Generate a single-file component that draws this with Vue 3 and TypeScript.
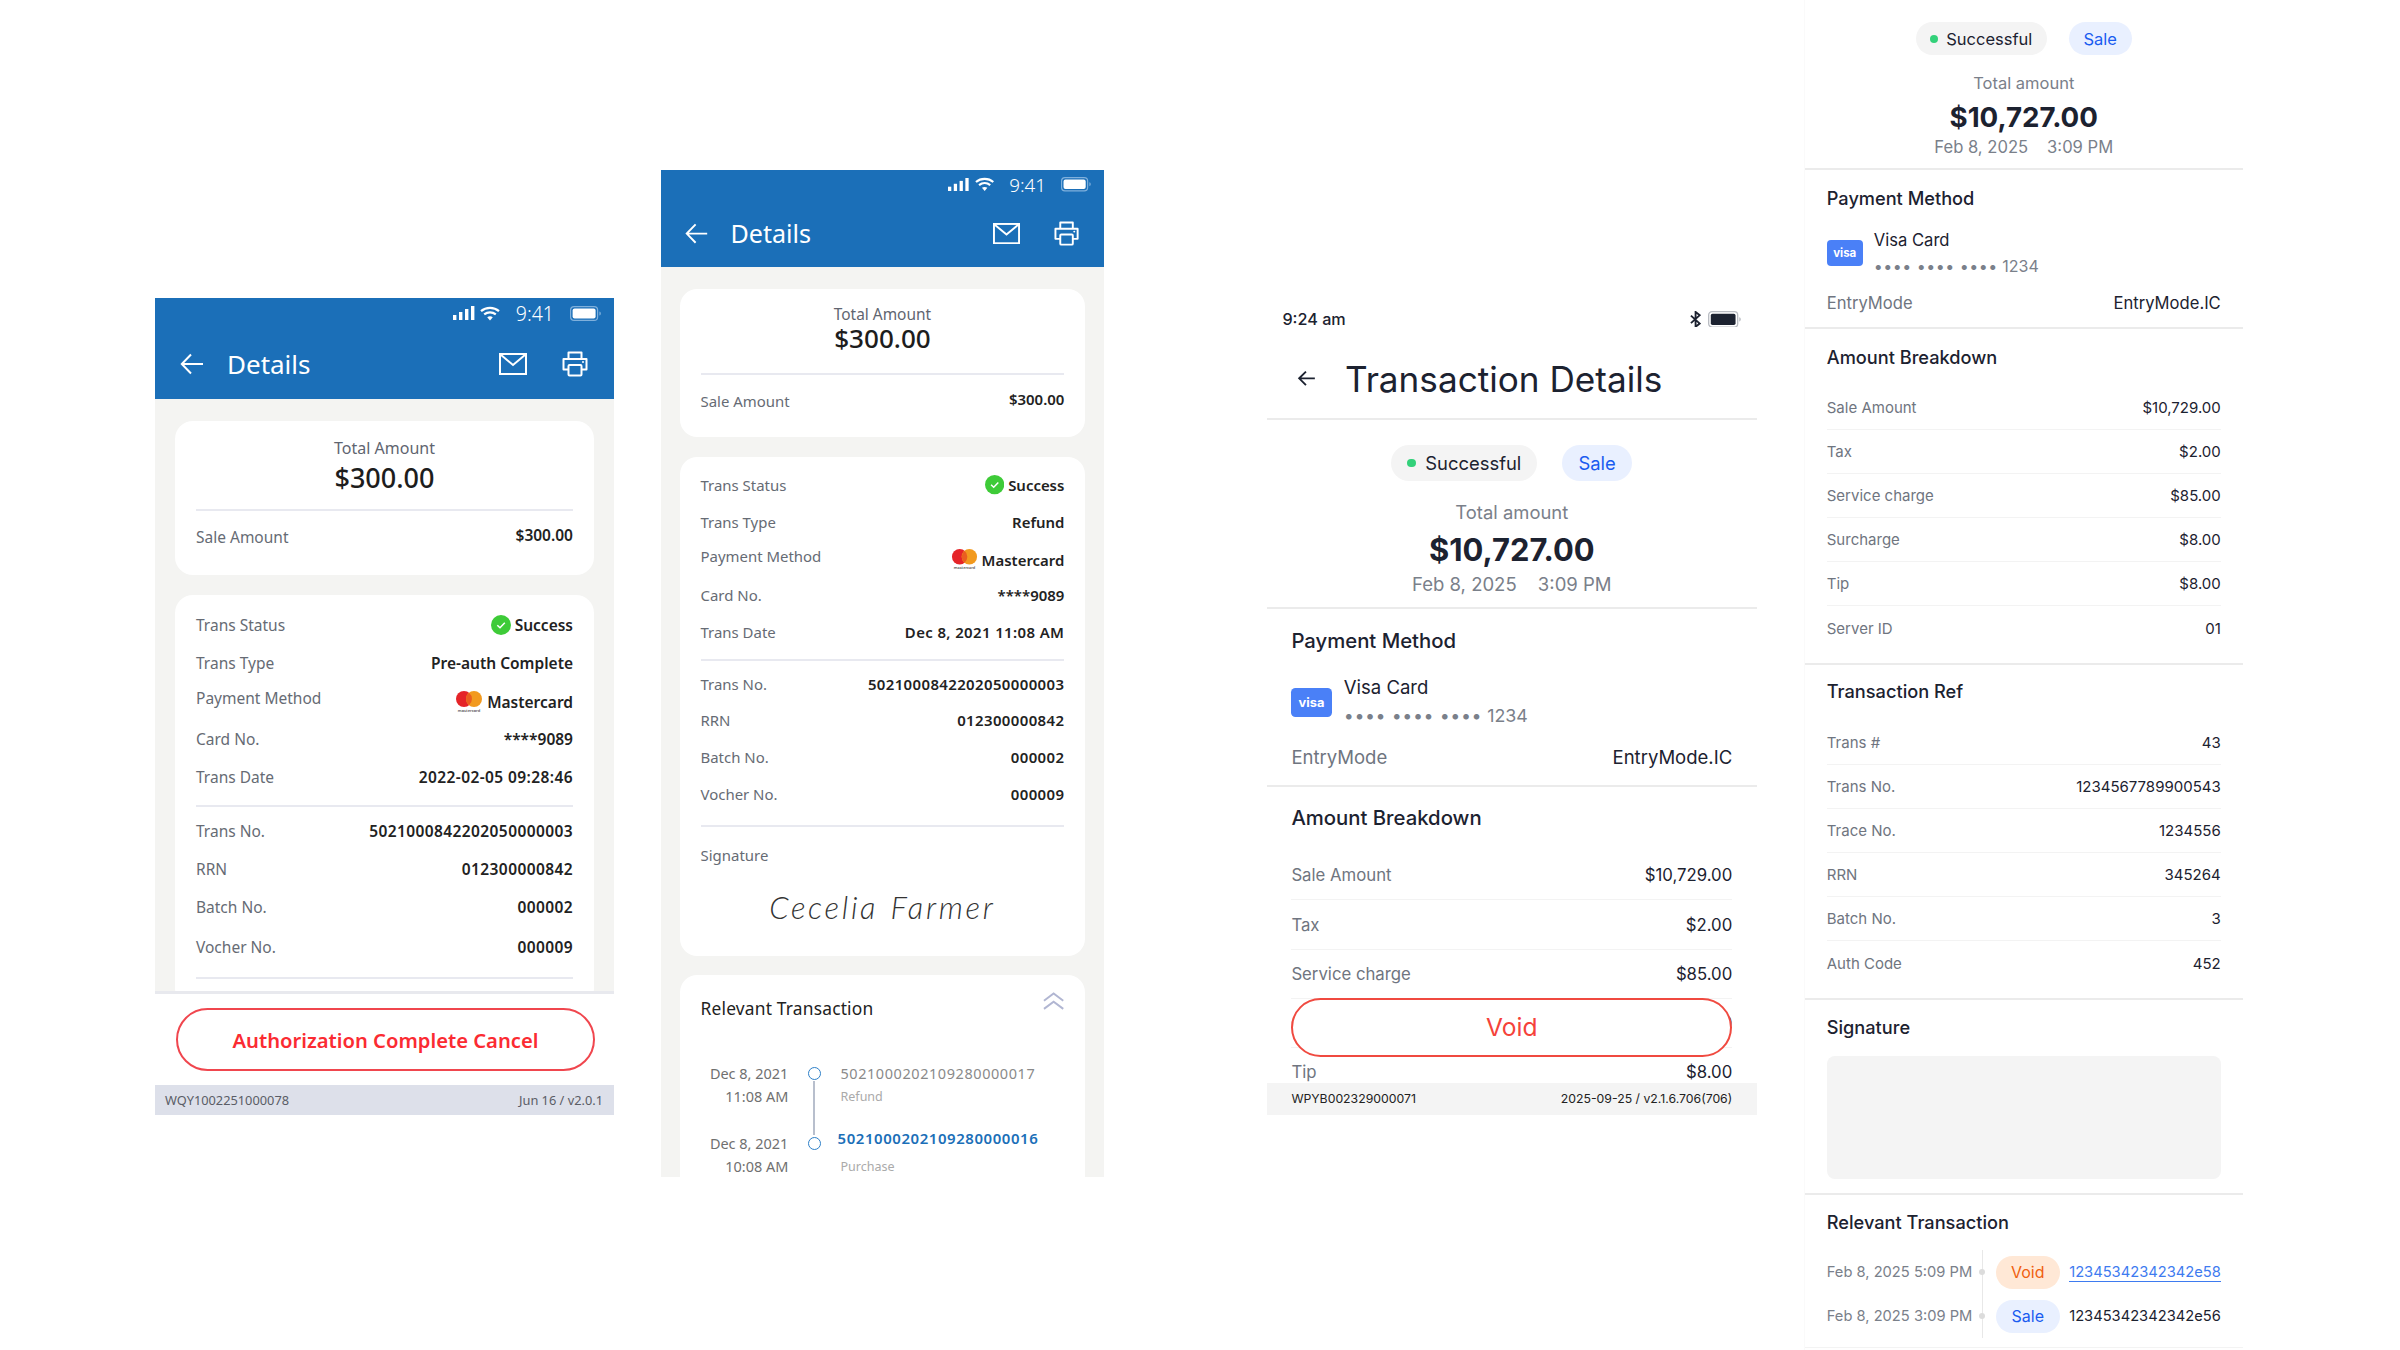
<script setup lang="ts">
interface Row { label: string; value: string }

const legacy = [
  {
    cls: 'p1',
    type: 'Pre-auth Complete',
    date: '2022-02-05 09:28:46',
    extended: false,
  },
  {
    cls: 'p2',
    type: 'Refund',
    date: 'Dec 8, 2021 11:08 AM',
    extended: true,
  },
]

const refRows: Row[] = [
  { label: 'Trans No.', value: '5021000842202050000003' },
  { label: 'RRN', value: '012300000842' },
  { label: 'Batch No.', value: '000002' },
  { label: 'Vocher No.', value: '000009' },
]

const breakdown: Row[] = [
  { label: 'Sale Amount', value: '$10,729.00' },
  { label: 'Tax', value: '$2.00' },
  { label: 'Service charge', value: '$85.00' },
  { label: 'Surcharge', value: '$8.00' },
  { label: 'Tip', value: '$8.00' },
  { label: 'Server ID', value: '01' },
]

const transRef: Row[] = [
  { label: 'Trans #', value: '43' },
  { label: 'Trans No.', value: '1234567789900543' },
  { label: 'Trace No.', value: '1234556' },
  { label: 'RRN', value: '345264' },
  { label: 'Batch No.', value: '3' },
  { label: 'Auth Code', value: '452' },
]

const modern = [
  { cls: 'p3', rows: breakdown.slice(0, 5), full: false },
  { cls: 'p4', rows: breakdown, full: true },
]
</script>

<template>
  <div class="canvas">
    <section v-for="p in legacy" :key="p.cls" class="phone" :class="p.cls">
      <header class="bar">
        <div class="status">
          <svg class="signal" viewBox="0 0 22 14" width="22" height="14"><rect x="0" y="9" width="3.4" height="5" fill="#fff"/><rect x="6" y="6" width="3.4" height="8" fill="#fff"/><rect x="12" y="3" width="3.4" height="11" fill="#fff"/><rect x="18" y="0" width="3.4" height="14" fill="#fff"/></svg>
          <svg class="wifi" viewBox="0 0 20 15" width="20" height="15"><path d="M1 5.2C6 .8 14 .8 19 5.2" fill="none" stroke="#fff" stroke-width="2.2"/><path d="M4.2 8.4c3.4-2.8 8.2-2.8 11.6 0" fill="none" stroke="#fff" stroke-width="2.2"/><path d="M7.2 11.2c1.7-1.2 3.9-1.2 5.6 0L10 14.4z" fill="#fff"/></svg>
          <span class="clock">9:41</span>
          <svg class="battery" viewBox="0 0 31 15" width="31" height="15"><rect x=".6" y=".6" width="27" height="13.8" rx="3.5" fill="none" stroke="#7fb0dc" stroke-width="1.2"/><rect x="2.6" y="2.6" width="23" height="9.8" rx="2" fill="#fff"/><path d="M29.4 5.5c1 .3 1.4 1.1 1.4 2s-.4 1.700-1.400 2z" fill="#7fb0dc"/></svg>
        </div>
        <nav class="nav">
          <svg class="nav-back" viewBox="0 0 24 22" width="24" height="22"><path d="M23 11H2M11 1.500 1.800 11l9.200 9.500" fill="none" stroke="#fff" stroke-width="2"/></svg>
          <span class="nav-title">Details</span>
          <svg class="nav-mail" viewBox="0 0 28 22" width="28" height="22"><rect x="1" y="1" width="26" height="20" fill="none" stroke="#fff" stroke-width="2"/><path d="M1.500 1.500 14 12 26.500 1.500" fill="none" stroke="#fff" stroke-width="2"/></svg>
          <svg class="nav-print" viewBox="0 0 26 26" width="26" height="26"><path d="M6.500 8V1.500h13V8M6.500 18.500H1.500V8h23v10.500h-5" fill="none" stroke="#fff" stroke-width="2" stroke-linejoin="round"/><rect x="6.500" y="14" width="13" height="10.500" rx="1" fill="none" stroke="#fff" stroke-width="2"/><circle cx="21" cy="11" r="1" fill="#fff"/></svg>
        </nav>
      </header>

      <div class="body">
        <article class="card summary">
          <div class="total">Total Amount</div>
          <div class="amount">$300.00</div>
          <div class="rule"></div>
          <div class="row sale">
            <span class="label">Sale Amount</span>
            <span class="value raised">$300.00</span>
          </div>
        </article>

        <article class="card info">
          <div class="row">
            <span class="label">Trans Status</span>
            <span class="value with-icon">
              <svg viewBox="0 0 20 20" width="20" height="20"><circle cx="10" cy="10" r="10" fill="#3ecb38"/><path d="M6.300 10.200 9 12.800l4.800-5" fill="none" stroke="#fff" stroke-width="1.500"/></svg>
              Success
            </span>
          </div>
          <div class="row">
            <span class="label">Trans Type</span>
            <span class="value">{{ p.type }}</span>
          </div>
          <div class="row">
            <span class="label lifted">Payment Method</span>
            <span class="value with-icon lowered">
              <svg viewBox="0 0 28 22" width="28" height="22"><circle cx="9" cy="8" r="8" fill="#e52428"/><circle cx="19" cy="8" r="8" fill="#f29a1f"/><path d="M14 1.800a8 8 0 0 1 0 12.400 8 8 0 0 1 0-12.400z" fill="#ea5e20"/><text x="14" y="21" text-anchor="middle" font-size="4" fill="#555">mastercard</text></svg>
              Mastercard
            </span>
          </div>
          <div class="row">
            <span class="label">Card No.</span>
            <span class="value">****9089</span>
          </div>
          <div class="row">
            <span class="label">Trans Date</span>
            <span class="value numeric">{{ p.date }}</span>
          </div>
          <div class="rule tight"></div>
          <div v-for="r in refRows" :key="r.label" class="row ref-row">
            <span class="label">{{ r.label }}</span>
            <span class="value numeric">{{ r.value }}</span>
          </div>
          <div class="rule closing"></div>
          <template v-if="p.extended">
            <div class="sig-label label">Signature</div>
            <div class="sig">Cecelia Farmer</div>
          </template>
        </article>

        <article v-if="p.extended" class="card relevant">
          <div class="rel-head">
            <span class="rel-title">Relevant Transaction</span>
            <svg class="rel-chev" viewBox="0 0 22 19" width="22" height="19"><path d="M1 9 11 1.500 21 9M1 17.500 11 10l10 7.500" fill="none" stroke="#b1b6d2" stroke-width="2"/></svg>
          </div>
          <div class="tl-row">
            <div class="tl-date">Dec 8, 2021<br>11:08 AM</div>
            <div class="tl-axis"><i class="tl-circle"></i><i class="tl-line"></i></div>
            <div class="tl-main">
              <div class="tl-no">5021000202109280000017</div>
              <div class="tl-sub">Refund</div>
            </div>
          </div>
          <div class="tl-row second">
            <div class="tl-date">Dec 8, 2021<br>10:08 AM</div>
            <div class="tl-axis"><i class="tl-circle"></i></div>
            <div class="tl-main">
              <div class="tl-no link">5021000202109280000016</div>
              <div class="tl-sub">Purchase</div>
            </div>
          </div>
        </article>
      </div>

      <template v-if="!p.extended">
        <div class="action">
          <button class="action-btn" type="button">Authorization Complete Cancel</button>
        </div>
        <footer class="foot">
          <span>WQY1002251000078</span>
          <span>Jun 16 / v2.0.1</span>
        </footer>
      </template>
    </section>

    <section v-for="m in modern" :key="m.cls" class="modern" :class="m.cls">
      <template v-if="!m.full">
        <div class="m-status">
          <span>9:24 am</span>
          <span class="m-status-right">
            <svg viewBox="0 0 12 18" width="10" height="15"><path d="M1 5l9.500 8.500L6 17V1l4.500 3.500L1 13" fill="none" stroke="#1c2230" stroke-width="2"/></svg>
            <svg viewBox="0 0 30 15" width="30" height="15"><rect x=".6" y=".6" width="26" height="13.800" rx="3" fill="none" stroke="#b9bcc2" stroke-width="1.200"/><rect x="2.500" y="2.500" width="22.200" height="10" rx="1.500" fill="#1c2230"/><path d="M28 5.500c1 .3 1.400 1.100 1.400 2s-.4 1.700-1.400 2z" fill="#b9bcc2"/></svg>
          </span>
        </div>
        <nav class="m-nav">
          <svg viewBox="0 0 18 16" width="17" height="15"><path d="M17 8H2M8.500 1.500 2 8l6.500 6.500" fill="none" stroke="#1c2230" stroke-width="1.800"/></svg>
          <span class="m-title">Transaction Details</span>
        </nav>
      </template>

      <div class="m-body">
        <div class="hero">
          <div class="pills">
            <span class="pill neutral"><i class="dot"></i>Successful</span>
            <span class="pill blue wide">Sale</span>
          </div>
          <div class="m-total">Total amount</div>
          <div class="m-amount">$10,727.00</div>
          <div class="m-date">Feb 8, 2025<span class="m-gap"></span>3:09 PM</div>
        </div>

        <div class="sec s-pay">
          <h3 class="sec-title">Payment Method</h3>
          <div class="visa-row">
            <span class="visa">visa</span>
            <div>
              <div class="visa-name">Visa Card</div>
              <div class="visa-no"><span class="bullets">•••• •••• ••••</span> 1234</div>
            </div>
          </div>
          <div class="entry">
            <span class="m-label">EntryMode</span>
            <span class="m-value">EntryMode.IC</span>
          </div>
        </div>

        <div class="sec s-break">
          <h3 class="sec-title">Amount Breakdown</h3>
          <div class="m-rows">
            <div v-for="r in m.rows" :key="r.label" class="m-row">
              <span class="m-label">{{ r.label }}</span>
              <span class="m-value">{{ r.value }}</span>
            </div>
          </div>
        </div>

        <template v-if="m.full">
          <div class="sec s-ref">
            <h3 class="sec-title">Transaction Ref</h3>
            <div class="m-rows">
              <div v-for="r in transRef" :key="r.label" class="m-row">
                <span class="m-label">{{ r.label }}</span>
                <span class="m-value">{{ r.value }}</span>
              </div>
            </div>
          </div>
          <div class="sec s-sign">
            <h3 class="sec-title">Signature</h3>
            <div class="sign-box"></div>
          </div>
          <div class="sec s-rel">
            <h3 class="sec-title">Relevant Transaction</h3>
            <div class="m-rel">
              <div class="m-rel-row">
                <span class="m-rel-date">Feb 8, 2025 5:09 PM</span>
                <span class="m-rel-axis"><i></i></span>
                <span class="pill orange rel-pill">Void</span>
                <span class="m-rel-no link-no">12345342342342e58</span>
              </div>
              <div class="m-rel-row">
                <span class="m-rel-date">Feb 8, 2025 3:09 PM</span>
                <span class="m-rel-axis"><i></i></span>
                <span class="pill blue rel-pill">Sale</span>
                <span class="m-rel-no">12345342342342e56</span>
              </div>
            </div>
          </div>
        </template>
      </div>

      <template v-if="!m.full">
        <button class="void" type="button">Void</button>
        <footer class="m-foot">
          <span>WPYB002329000071</span>
          <span>2025-09-25 / v2.1.6.706(706)</span>
        </footer>
      </template>
    </section>
  </div>
</template>

<style scoped>
.canvas {
  display: flex;
  align-items: flex-start;
  width: 2400px;
  height: 1350px;
  padding-left: 155px;
  box-sizing: border-box;
  overflow: hidden;
  background: #fff;
}

/* blue legacy phones */
.phone {
  flex: none;
  display: flex;
  flex-direction: column;
  width: 459px;
  overflow: hidden;
  background: #f4f4f2;
  font-family: "Noto Sans", sans-serif;
  color: #222;
}
.p1 {
  height: 817px;
  margin-top: 298px;
}
.p2 {
  zoom: 0.965;
  height: 1044px;
  margin-top: 176.200px;
  margin-left: 48.700px;
}
.bar {
  flex: none;
  height: 101px;
  background: #1b6fb8;
  color: #fff;
}
.status {
  display: flex;
  align-items: center;
  justify-content: flex-end;
  height: 30px;
  padding-right: 13px;
}
.wifi {
  margin-left: 5px;
}
.clock {
  margin: 0 16px 0 16px;
  font-size: 19.500px;
  font-weight: 300;
}
.nav {
  display: flex;
  align-items: center;
  height: 71px;
  padding: 0 26px 0 25px;
}
.nav-title {
  flex: 1;
  margin-left: 23px;
  font-size: 26px;
}
.nav-print {
  margin-left: 35px;
}
.body {
  flex: 1;
  min-height: 0;
  overflow: hidden;
  padding: 22px 20px 0;
}
.card {
  box-sizing: border-box;
  padding: 0 21px;
  border-radius: 18px;
  background: #fff;
}
.summary {
  height: 154px;
  padding-top: 16px;
  text-align: center;
}
.total {
  font-size: 16px;
  line-height: 22px;
  color: #5f6570;
}
.amount {
  font-size: 27px;
  font-weight: 500;
  line-height: 38px;
  color: #1d1d1d;
}
.p2 .amount {
  margin-top: -6px;
}
.rule {
  height: 2px;
  margin-top: 12px;
  background: #e8e9f0;
}
.p2 .summary .rule {
  margin-top: 17px;
}
.sale {
  margin-top: 7px;
}
.p2 .sale {
  margin-top: 8.500px;
}
.row {
  display: flex;
  align-items: center;
  justify-content: space-between;
  height: 38px;
}
.ref-row:nth-last-child(2) {
  margin-top: 2px;
}
.label {
  font-size: 15.500px;
  color: #666b74;
}
.value {
  font-size: 15.500px;
  font-weight: 600;
  color: #222;
}
.numeric {
  letter-spacing: 0.4px;
}
.raised {
  margin-bottom: 5px;
}
.lifted {
  margin-bottom: 5px;
}
.lowered {
  margin-top: 3px;
}
.with-icon {
  display: inline-flex;
  align-items: center;
  gap: 4px;
}
.info {
  margin-top: 20px;
  padding-top: 10.500px;
  padding-bottom: 27px;
}
.rule.tight {
  margin: 9px 0 5px;
}
.rule.closing {
  margin: 11px 0 0;
}
.p2 .rule.closing {
  margin-top: 13px;
}
.sig-label {
  margin-top: 19px;
  line-height: 22px;
}
.sig {
  margin-top: 22px;
  line-height: 44px;
  text-align: center;
  font-family: Lato, sans-serif;
  font-size: 32px;
  font-style: italic;
  font-weight: 300;
  letter-spacing: 2.800px;
  word-spacing: 2px;
  color: #333;
}
.relevant {
  height: 262px;
  margin-top: 20px;
  padding-top: 24px;
}
.rel-head {
  display: flex;
  align-items: flex-start;
  justify-content: space-between;
  height: 67px;
}
.rel-title {
  font-size: 18px;
  line-height: 22px;
  letter-spacing: 0.2px;
  color: #222;
}
.rel-chev {
  margin-top: -6px;
}
.tl-row {
  display: flex;
  height: 72.500px;
}
.tl-date {
  flex: none;
  width: 91px;
  font-size: 15px;
  line-height: 23.500px;
  text-align: right;
  color: #707070;
}
.tl-axis {
  position: relative;
  flex: none;
  width: 54px;
}
.tl-circle {
  position: absolute;
  left: 20px;
  top: 4px;
  width: 12px;
  height: 12px;
  border: 1.500px solid #2d7fc8;
  border-radius: 50%;
  background: #fff;
}
.tl-line {
  position: absolute;
  left: 26px;
  top: 19px;
  width: 2px;
  height: 56px;
  background: #b8bfcd;
}
.tl-no {
  font-size: 15px;
  line-height: 23.500px;
  letter-spacing: 0.6px;
  color: #8a8a8a;
}
.tl-no.link {
  margin: -6px 0 6px -3px;
  font-size: 15.500px;
  font-weight: 600;
  letter-spacing: 0.6px;
  color: #1b6fb8;
}
.tl-sub {
  font-size: 13px;
  line-height: 23.500px;
  color: #aaa;
}
.action {
  flex: none;
  box-sizing: border-box;
  height: 94px;
  padding: 14px 19px 0 21px;
  border-top: 3px solid #e8e9ee;
  background: #fff;
}
.action-btn {
  display: block;
  width: 100%;
  height: 63px;
  border: 2px solid #f0464e;
  border-radius: 32px;
  background: #fff;
  font-family: inherit;
  font-size: 20.200px;
  font-weight: 600;
  color: #fb2b32;
}
.foot {
  flex: none;
  display: flex;
  align-items: center;
  justify-content: space-between;
  height: 30px;
  padding: 0 11px 0 10px;
  background: #dde0ea;
  font-size: 12.800px;
  color: #5a5d66;
}

/* white modern screens */
.modern {
  position: relative;
  flex: none;
  display: flex;
  flex-direction: column;
  box-sizing: border-box;
  width: 439px;
  overflow: hidden;
  background: #fff;
  font-family: Inter, sans-serif;
  color: #1c2230;
}
.p3 {
  zoom: 1.116;
  height: 728.500px;
  margin-top: 270.600px;
  margin-left: 146px;
}
.p4 {
  height: 1350px;
  margin-left: 47px;
  border-left: 1px solid #fafafa;
}
.m-status {
  flex: none;
  display: flex;
  align-items: center;
  justify-content: space-between;
  height: 30.500px;
  padding: 0 14px;
  font-size: 14.500px;
  font-weight: 500;
}
.m-status-right {
  display: inline-flex;
  align-items: center;
  gap: 6px;
}
.m-nav {
  flex: none;
  display: flex;
  align-items: center;
  gap: 26px;
  box-sizing: border-box;
  height: 75.300px;
  padding-left: 27px;
  padding-top: 3px;
  border-bottom: 2px solid #ebebeb;
}
.m-title {
  font-size: 31.500px;
  font-weight: 400;
}
.m-body {
  flex: 1;
  min-height: 0;
  overflow: hidden;
}
.hero {
  box-sizing: border-box;
  padding: 22px 0 11px;
  border-bottom: 2px solid #ebebeb;
  text-align: center;
}
.pills {
  display: flex;
  justify-content: center;
  gap: 22px;
}
.pill {
  display: inline-flex;
  align-items: center;
  justify-content: center;
  box-sizing: border-box;
  height: 33px;
  border-radius: 17px;
  font-size: 16.500px;
}
.neutral {
  width: 131px;
  gap: 8px;
  background: #f4f4f4;
}
.dot {
  width: 8px;
  height: 8px;
  border-radius: 50%;
  background: #33d17a;
}
.blue {
  background: #e9f0ff;
  color: #1a5cf0;
}
.wide {
  width: 63px;
}
.orange {
  background: #ffe8d6;
  color: #f0600f;
}
.m-total {
  margin-top: 16px;
  font-size: 16.500px;
  line-height: 24px;
  color: #7a808a;
}
.m-amount {
  margin-top: 2px;
  font-size: 27.700px;
  font-weight: 700;
  line-height: 40px;
}
.m-date {
  font-size: 16.600px;
  line-height: 20px;
  color: #7a808a;
}
.m-gap {
  display: inline-block;
  width: 19px;
}
.sec {
  padding: 15px 22px 12px;
  border-bottom: 2px solid #ebebeb;
}
.sec-title {
  margin: 0;
  font-size: 18.200px;
  font-weight: 500;
  line-height: 26px;
}
.visa-row {
  display: flex;
  align-items: center;
  gap: 11px;
  margin-top: 17px;
}
.visa {
  display: flex;
  align-items: center;
  justify-content: center;
  width: 36px;
  height: 26px;
  border-radius: 4px;
  background: #4a80f7;
  font-size: 11.500px;
  font-weight: 700;
  color: #fff;
}
.visa-name {
  font-size: 16.600px;
  line-height: 24px;
}
.visa-no {
  margin-top: 2px;
  font-size: 16px;
  line-height: 24px;
  color: #7a808a;
}
.bullets {
  letter-spacing: 0.500px;
}
.entry {
  display: flex;
  justify-content: space-between;
  margin-top: 13px;
  font-size: 16.600px;
  line-height: 24px;
}
.m-label {
  color: #6f7580;
}
.m-rows {
  margin-top: 16px;
}
.p3 .m-rows {
  margin-top: 17px;
}
.m-row {
  display: flex;
  align-items: center;
  justify-content: space-between;
  box-sizing: border-box;
  height: 44px;
  border-bottom: 1px solid #f3f3f3;
  font-size: 15px;
}
.m-row:last-child {
  border-bottom: 0;
}
.s-break {
  padding: 15px 22px 13px;
}
.s-ref {
  padding: 13px 22px 13px;
}
.s-ref .m-rows {
  margin-top: 17px;
}
.s-sign {
  padding: 14px 22px 14px;
}
.sign-box {
  height: 123px;
  margin-top: 16px;
  border-radius: 8px;
  background: #f4f4f4;
}
.s-rel {
  padding: 14px 22px 9px;
  border-bottom: 1px solid #f3f3f3;
}
.m-rel {
  margin-top: 15px;
}
.m-rel-row {
  display: flex;
  align-items: center;
  height: 44px;
  font-size: 14.700px;
}
.m-rel-date {
  flex: none;
  width: 146px;
  white-space: nowrap;
  color: #7a808a;
}
.m-rel-axis {
  position: relative;
  flex: none;
  align-self: stretch;
  width: 23px;
}
.m-rel-axis::before {
  content: "";
  position: absolute;
  left: 9px;
  top: 0;
  bottom: 0;
  width: 1.500px;
  background: #e8e8e8;
}
.m-rel-axis i {
  position: absolute;
  left: 6.500px;
  top: 19px;
  width: 6px;
  height: 6px;
  border-radius: 50%;
  background: #dcdcdc;
}
.rel-pill {
  flex: none;
  width: 64px;
  font-size: 16px;
}
.m-rel-no {
  margin-left: auto;
  color: #1c2230;
}
.link-no {
  border-bottom: 1px solid #3e7bf0;
  color: #3e7bf0;
}

.void {
  position: absolute;
  left: 22px;
  right: 22px;
  bottom: 52px;
  height: 53px;
  border: 1.800px solid #f04a40;
  border-radius: 27px;
  background: #fff;
  font-family: inherit;
  font-size: 22px;
  font-weight: 400;
  color: #f5423a;
}
.p3 .m-foot {
  flex: none;
  display: flex;
  align-items: center;
  justify-content: space-between;
  height: 29px;
  padding: 0 22px;
  background: #f4f4f4;
  font-size: 11px;
  color: #222;
}
</style>

<style>
html,
body {
  margin: 0;
  background: #fff;
}
</style>
